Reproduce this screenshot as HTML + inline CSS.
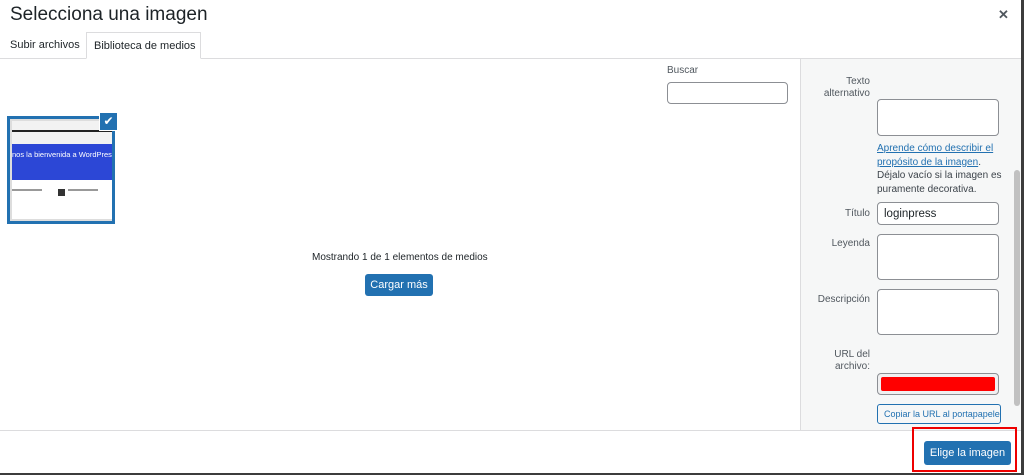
<!DOCTYPE html>
<html><head><style>
*{box-sizing:border-box;margin:0;padding:0}
body{width:1024px;height:475px;overflow:hidden;background:#fff;font-family:"Liberation Sans",Arial,sans-serif;color:#1d2327;position:relative}
.abs{position:absolute}
h1{position:absolute;left:10px;top:4px;font-size:19px;font-weight:400;color:#1d2327}
.x{position:absolute;left:998px;top:7px;font-size:13px;color:#50575e;font-weight:bold}
.tabline{left:0;top:58px;width:1021px;height:1px;background:#dcdcde}
.tab1{left:10px;top:39px;font-size:11px}
.tab2{left:86px;top:32px;width:115px;height:27px;border:1px solid #dcdcde;border-bottom:1px solid #fff;background:#fff;font-size:11px;padding:7px 0 0 7px}
.side{left:800px;top:59px;width:221px;height:371px;background:#f6f7f7;border-left:1px solid #dcdcde}
.lbl{font-size:10px;color:#50575e;text-align:right;width:70px}
.inp{background:#fff;border:1px solid #8c8f94;border-radius:4px}
.foot{left:0;top:430px;width:1021px;height:1px;background:#dcdcde}
.btn{background:#2271b1;color:#fff;border-radius:3px;font-size:11px;text-align:center}
</style></head><body>
<h1>Selecciona una imagen</h1>
<div class="x">✕</div>
<div class="abs tabline"></div>
<div class="abs tab1">Subir archivos</div>
<div class="abs tab2">Biblioteca de medios</div>

<div class="abs" style="left:667px;top:65px;font-size:10px;color:#50575e">Buscar</div>
<div class="abs inp" style="left:667px;top:82px;width:121px;height:22px"></div>

<div class="abs" style="left:7px;top:116px;width:108px;height:108px;border:3px solid #2271b1;background:#ddd;overflow:hidden">
 <div class="abs" style="left:2px;top:2px;width:100px;height:98px;background:#f2f2f2"></div>
 <div class="abs" style="left:2px;top:11px;width:100px;height:2px;background:#222"></div>
 <div class="abs" style="left:2px;top:25px;width:100px;height:36px;background:#2c47d6;color:#fff;font-size:7.5px;padding:6px 0 0 0;white-space:nowrap">nos la bienvenida a WordPress</div>
 <div class="abs" style="left:2px;top:61px;width:100px;height:39px;background:#fff"></div>
 <div class="abs" style="left:48px;top:70px;width:7px;height:7px;background:#333"></div>
 <div class="abs" style="left:2px;top:70px;width:30px;height:2px;background:#999"></div>
 <div class="abs" style="left:58px;top:70px;width:30px;height:2px;background:#999"></div>
</div>
<div class="abs" style="left:99px;top:112px;width:19px;height:19px;background:#2271b1;border:1px solid #fff;color:#fff;font-size:12px;text-align:center;line-height:17px">✔</div>

<div class="abs" style="left:312px;top:252px;font-size:10px">Mostrando 1 de 1 elementos de medios</div>
<div class="abs btn" style="left:365px;top:274px;width:68px;height:22px;line-height:22px">Cargar más</div>

<div class="abs side"></div>
<div class="abs" style="left:1014px;top:170px;width:6px;height:236px;background:#c1c1c1;border-radius:3px"></div>
<div class="abs lbl" style="left:800px;top:76px;line-height:12px">Texto<br>alternativo</div>
<div class="abs inp" style="left:877px;top:99px;width:122px;height:37px"></div>
<div class="abs" style="left:877px;top:142px;font-size:10px;line-height:13.5px;color:#3c434a;width:125px"><span style="color:#2271b1;text-decoration:underline">Aprende cómo describir el propósito de la imagen</span>. Déjalo vacío si la imagen es puramente decorativa.</div>
<div class="abs lbl" style="left:800px;top:208px">Título</div>
<div class="abs inp" style="left:877px;top:202px;width:122px;height:23px;font-size:11.5px;padding:5px 0 0 6px;color:#1d2327">loginpress</div>
<div class="abs lbl" style="left:800px;top:238px">Leyenda</div>
<div class="abs inp" style="left:877px;top:234px;width:122px;height:46px"></div>
<div class="abs lbl" style="left:800px;top:294px">Descripción</div>
<div class="abs inp" style="left:877px;top:289px;width:122px;height:46px"></div>
<div class="abs lbl" style="left:800px;top:349px;line-height:12px">URL del<br>archivo:</div>
<div class="abs inp" style="left:877px;top:373px;width:122px;height:22px;background:#f0f0f1;padding:3px"><div style="width:114px;height:14px;background:#f00;border-radius:2px"></div></div>
<div class="abs" style="left:877px;top:404px;width:124px;height:20px;border:1px solid #2271b1;border-radius:3px;background:#f6f7f7;color:#2271b1;font-size:9px;padding:4px 0 0 6px;white-space:nowrap;overflow:hidden">Copiar la URL al portapapeles</div>

<div class="abs foot"></div>
<div class="abs" style="left:912px;top:427px;width:105px;height:45px;border:2px solid #e00"></div>
<div class="abs btn" style="left:924px;top:441px;width:87px;height:24px;line-height:24px">Elige la imagen</div>
<div class="abs" style="left:1021px;top:0;width:3px;height:475px;background:#3c3c3c"></div>
<div class="abs" style="left:0;top:473px;width:1024px;height:2px;background:#3c3c3c"></div>
</body></html>
